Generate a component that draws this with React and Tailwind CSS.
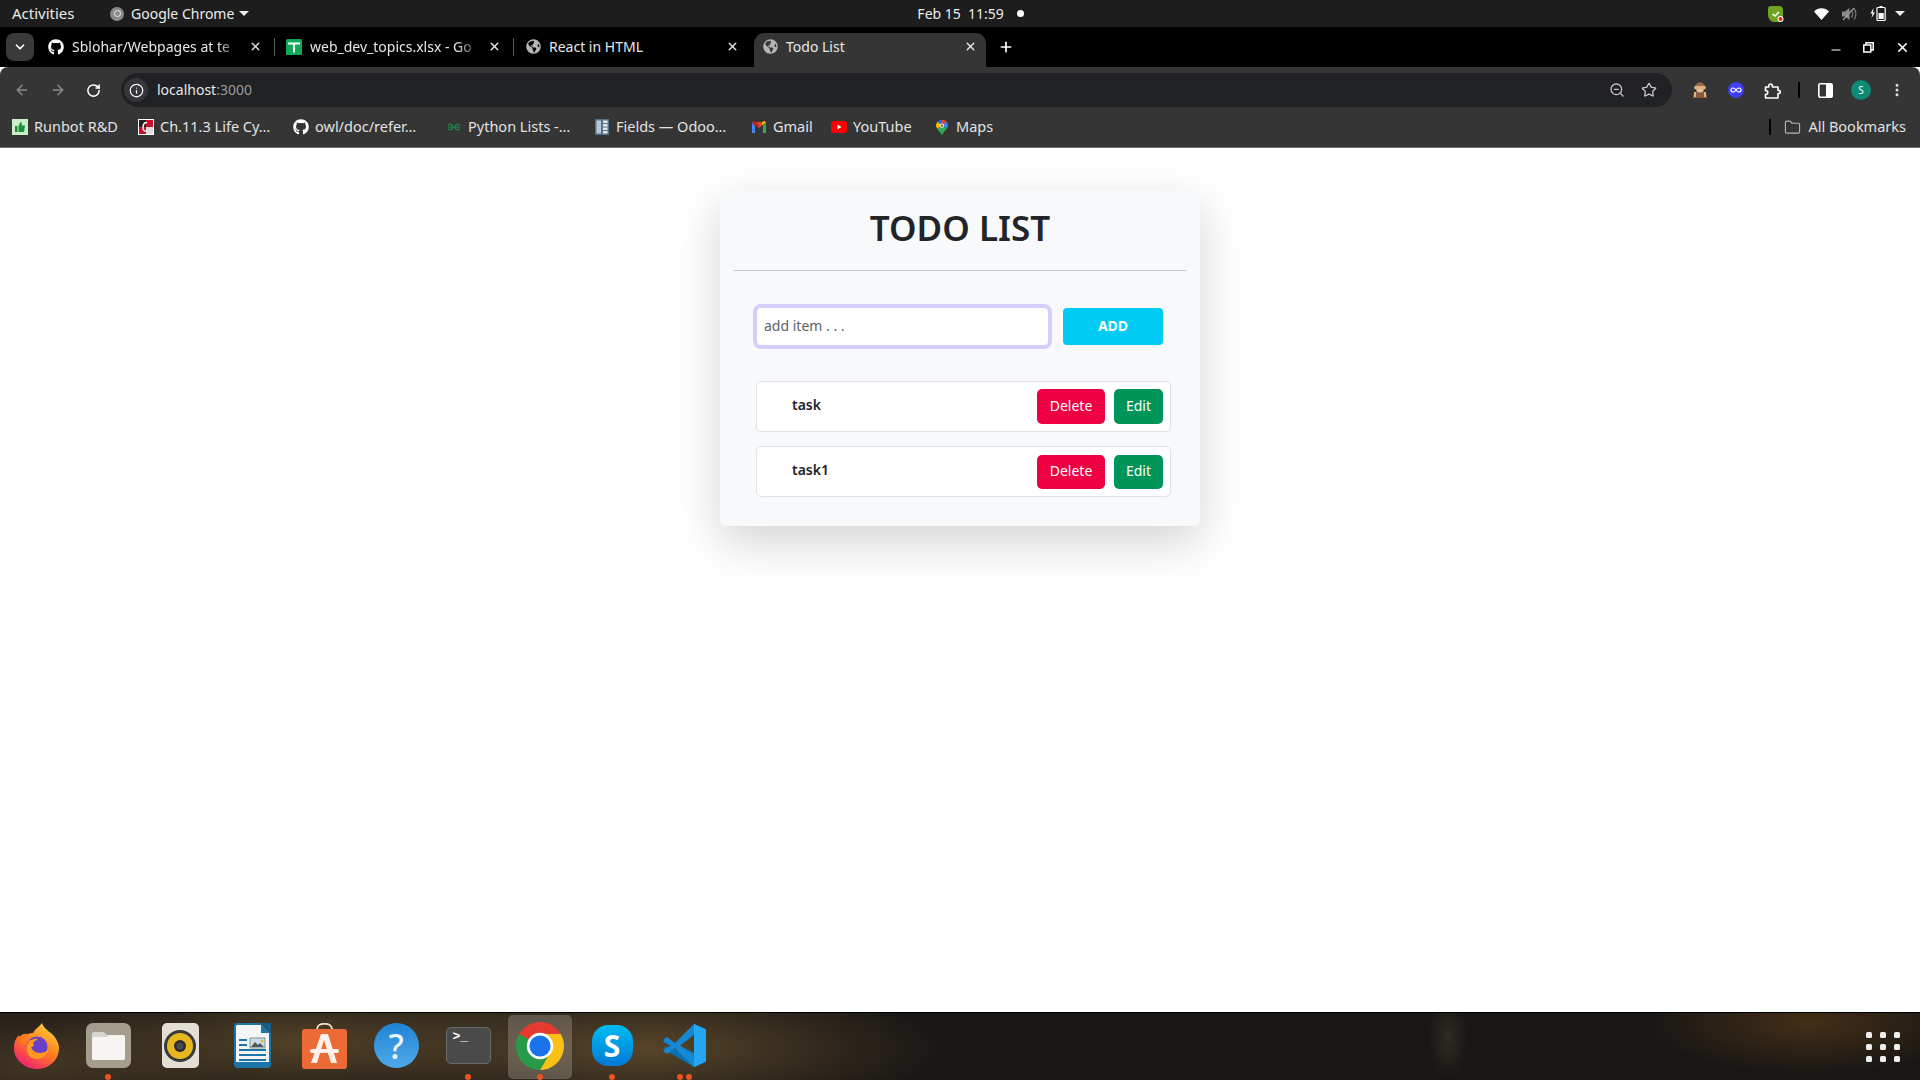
import { ArrowLeft, ArrowRight, RotateCw, Info, ZoomOut, Star, MoreVertical, Folder, X, Plus, ChevronDown, Minus } from "lucide-react"
import { FaGithub, FaGlobeAmericas } from "react-icons/fa"

const ui = "font-['Noto_Sans',sans-serif]"

const Tab = ({ icon, title, active, fade, sep, className }) => (
  <div className={`relative flex h-[34px] items-center pb-[7px] ${active ? "rounded-t-[10px] bg-[#353535] pl-[8px] pr-[9px]" : "pl-[11px] pr-[13px]"} ${className}`}>
    <span className="flex w-[16px] shrink-0 items-center justify-center">{icon}</span>
    <span className={`ml-[8px] min-w-0 flex-1 whitespace-nowrap text-[14px] text-[#e8e8e8] ${fade ? "[mask-image:linear-gradient(to_right,black_85%,transparent)]" : ""}`}>{title}</span>
    <X size={13} strokeWidth={2.5} className="ml-[6px] shrink-0 text-[#e8e8e8]" />
    {sep && <span className="absolute right-0 top-[5px] h-[18px] w-px bg-[#5a5a5a]" />}
  </div>
)

const Bookmark = ({ icon, label, className }) => (
  <div className={`flex shrink-0 items-center gap-[6px] ${className}`}>
    <span className="flex w-[16px] shrink-0 items-center justify-center">{icon}</span>
    <span className="-mt-[1px] whitespace-nowrap text-[14.500px] text-[#e3e3e3]">{label}</span>
  </div>
)

const ThumbIcon = () => (
  <svg width="16" height="16" viewBox="0 0 16 16">
    <rect width="16" height="16" fill="#c8efc8" />
    <path d="M3 7h2.500v6H3zM6.500 7l2-4c1 0 1.500 .8 1.300 2L9.500 6.500H13l-1 6.500H6.500z" fill="#1f8f3c" />
  </svg>
)

const CherryIcon = () => (
  <svg width="16" height="16" viewBox="0 0 16 16">
    <rect width="16" height="16" fill="#fff" />
    <rect x="1" y="1" width="14" height="14" fill="#222" />
    <rect x="8" y="1" width="7" height="7" fill="#c8102e" />
    <rect x="1" y="8" width="7" height="7" fill="#c8102e" />
    <rect x="8" y="8" width="7" height="7" fill="#ddd" />
    <path d="M9 3.500C6 3.500 5 6 5 8.500s1 4 3.500 3.500" fill="none" stroke="#fff" strokeWidth="1.400" />
  </svg>
)

const GfgIcon = () => (
  <svg width="14" height="10" viewBox="0 0 14 10" fill="none" stroke="#1e8f4a" strokeWidth="1.200">
    <path d="M7 5H.800M7 5h6.200M1 3.500a2.500 2.500 0 0 1 4.500 0c.8 1.500.8 1.500 0 3a2.500 2.500 0 0 1-4.500 0M13 3.500a2.500 2.500 0 0 0-4.500 0c-.8 1.500-.8 1.500 0 3a2.500 2.500 0 0 0 4.500 0" />
  </svg>
)

const OdooIcon = () => (
  <svg width="14" height="16" viewBox="0 0 14 16">
    <rect width="14" height="16" fill="#54708c" />
    <rect x="1.500" y="1.500" width="4.500" height="13" fill="#b8c8d6" />
    <rect x="8" y="1.500" width="4.500" height="13" fill="#e6e6e6" />
    <path d="M8 4.500h4.500M8 8h4.500M8 11.500h4.500" stroke="#54708c" strokeWidth="1.200" />
  </svg>
)

const GmailIcon = () => (
  <svg width="14" height="12" viewBox="0 0 14 12">
    <path d="M0 1.500V12h3V5z" fill="#4285f4" />
    <path d="M14 1.500V12h-3V5z" fill="#34a853" />
    <path d="M0 1.500 7 7l3-2.400V1z" fill="#ea4335" />
    <path d="M10 1v3.600l4-3.100C14 .5 12 -.5 10 1z" fill="#fbbc04" />
    <path d="M0 1.500C0 .5 1.800 -.5 3 .8L7 4v3z" fill="#c5221f" />
  </svg>
)

const YoutubeIcon = () => (
  <svg width="16" height="12" viewBox="0 0 16 12">
    <rect width="16" height="12" rx="3" fill="#f00" />
    <path d="M6.500 3.500v5L10.500 6z" fill="#fff" />
  </svg>
)

const MapsIcon = () => (
  <svg width="12" height="17" viewBox="0 0 13 17">
    <path d="M6.500 0A6.300 6.300 0 0 0 1.700 2.200L6.500 6.500z" fill="#1a73e8" />
    <path d="M6.500 0c2 0 3.700 .9 4.900 2.400L6.500 6.500z" fill="#ea4335" />
    <path d="M1.700 2.200A6.300 6.300 0 0 0 1.200 9.800L6.500 6.500z" fill="#fbbc04" />
    <path d="M11.400 2.400A6.300 6.300 0 0 1 11.800 9.600L6.500 6.500z" fill="#4285f4" />
    <path d="M1.200 9.800C3 12.400 5.300 14 6.500 17c1.200-3 3.300-4.700 5.300-7.400L6.500 6.500z" fill="#34a853" />
    <circle cx="6.500" cy="6.500" r="2.200" fill="#fff" />
    <circle cx="6.500" cy="6.500" r="1.300" fill="#7a5a10" />
  </svg>
)

const SheetsIcon = () => (
  <svg width="16" height="16" viewBox="0 0 16 16">
    <rect width="16" height="16" rx="1.500" fill="#0fa958" />
    <path d="M2 3.500h12v2H9v8H7v-8H2z" fill="#fff" />
    <path d="M2 7.500h5v1.500H2zM9 7.500h5v1.500H9z" fill="#0fa958" />
  </svg>
)

const MonkeyIcon = () => (
  <svg width="16" height="16" viewBox="0 0 16 16">
    <path d="M1 16c0-5 2-7 7-7s7 2 7 7z" fill="#8a5a3c" />
    <circle cx="8" cy="5.500" r="5" fill="#9a6a48" />
    <ellipse cx="8" cy="8" rx="3.500" ry="2.500" fill="#e8c098" />
    <rect x="2" y="4" width="12" height="3" rx="1.500" fill="#e0b080" />
    <path d="M3 10v5M13 10v5" stroke="#e0b080" strokeWidth="2" />
  </svg>
)

const InfinityIcon = () => (
  <svg width="16" height="16" viewBox="0 0 16 16">
    <circle cx="8" cy="8" r="8" fill="#3f3ff0" />
    <path d="M8 8C7 6.500 6 6 5 6a2 2 0 0 0 0 4c1 0 2-.5 3-2s2-2 3-2a2 2 0 0 1 0 4c-1 0-2-.5-3-2z" fill="none" stroke="#fff" strokeWidth="1.200" />
  </svg>
)

const PuzzleIcon = () => (
  <svg width="17" height="17" viewBox="0 0 17 17" fill="none" stroke="#fff" strokeWidth="1.600" strokeLinejoin="round">
    <path d="M1.500 5h3.300V3.800c0-2.500 3.600-2.500 3.600 0V5H14v3.500h1.300c1.300 0 1.300 3 0 3H14V16H1.500v-3.800h1c1.700 0 1.700-3.500 0-3.500h-1z" />
  </svg>
)

const SidePanelIcon = () => (
  <svg width="15" height="15" viewBox="0 0 15 15">
    <rect x=".8" y=".8" width="13.400" height="13.400" rx="1.500" fill="#353535" stroke="#fff" strokeWidth="1.600" />
    <path d="M8 .8h5.500a.8 .8 0 0 1 .8 .8v11.800a.8 .8 0 0 1-.8 .8H8z" fill="#fff" />
  </svg>
)

const RestoreIcon = () => (
  <svg width="11" height="11" viewBox="0 0 11 11" fill="none" stroke="#fff" strokeWidth="1.500">
    <rect x=".8" y="3" width="7" height="7" />
    <path d="M3 3V.8h7.200V8H8" />
  </svg>
)

const ShieldTray = () => (
  <svg width="16" height="16" viewBox="0 0 16 16">
    <path d="M3 0h8c3 0 4 2 4 4v8c0 2-1 4-4 4H6C2 16 0 12 0 8V3c0-2 1-3 3-3z" fill="#6fa51e" />
    <path d="M4.500 8 7 10l4-4" fill="none" stroke="#fff" strokeWidth="1.600" />
    <circle cx="12.500" cy="13" r="3" fill="#fff" />
    <circle cx="12.500" cy="13" r="2" fill="#e8262a" />
  </svg>
)

const WifiIcon = () => (
  <svg width="15" height="12" viewBox="0 0 15 12">
    <path d="M0 3.500C4 -.8 11 -.8 15 3.500L7.500 12z" fill="#fff" />
  </svg>
)

const VolumeIcon = () => (
  <svg width="15" height="14" viewBox="0 0 15 14" fill="none">
    <path d="M0 4.500h3L7.500 1v12L3 9.500H0z" fill="#8a8a8a" />
    <path d="M9.500 3.500c1.500 2 1.500 5 0 7M12 1.500c2.500 3 2.500 8 0 11" stroke="#7a7a7a" strokeWidth="1.200" />
    <path d="M1 13 12 1" stroke="#9a9a9a" strokeWidth="1.200" />
  </svg>
)

const BatteryIcon = () => (
  <svg width="16" height="15" viewBox="0 0 16 15">
    <path d="M3.500 2 .5 7.500h2L1.500 12 5 6.500H3z" fill="#fff" />
    <rect x="7" y="1.500" width="8.200" height="13" rx="1" fill="none" stroke="#fff" strokeWidth="1.200" />
    <rect x="9.500" y="0" width="3" height="1.500" fill="#fff" />
    <rect x="8.500" y="7" width="5.200" height="6" fill="#fff" />
  </svg>
)

const FirefoxIcon = () => (
  <svg width="45" height="46" viewBox="0 0 45 46">
    <defs>
      <linearGradient id="ffa" x1="0.800" y1="0" x2="0.200" y2="1">
        <stop offset="0" stopColor="#ffd43a" />
        <stop offset="0.500" stopColor="#ff7a1f" />
        <stop offset="1" stopColor="#f0177c" />
      </linearGradient>
    </defs>
    <path d="M28 0c1 4 5 7 10 11 5 5 7 10 7 14 0 12-10 21-22 21S0 37 0 25c0-6 2-10 5-13 0 2 1 4 2 5 2-4 7-7 12-7 2-4 6-6 9-10z" fill="url(#ffa)" />
    <circle cx="23" cy="24" r="10.500" fill="#6a3fc8" />
    <path d="M13 22c2-5 7-7 11-6-2 1-4 3-5 4 2 2 0 4-2 4 1 3 4 6 9 6 5 0 8-3 9-5 0 6-6 11-12 11-7 0-12-6-10-14z" fill="#ff9a1f" />
    <path d="M5 14c3-3 6-4 9-3-2 1-3 3-3 4 2 0 5 1 6 3-3 0-5 2-6 4-3-2-5-5-6-8z" fill="#ff7a1f" />
  </svg>
)

const FilesIcon = () => (
  <div className="flex h-[45px] w-[45px] items-center justify-center rounded-[7px] bg-[#a59d8e]">
    <svg width="33" height="28" viewBox="0 0 33 28">
      <path d="M2 0h10l3 3h16a2 2 0 0 1 2 2v21a2 2 0 0 1-2 2H2a2 2 0 0 1-2-2V2a2 2 0 0 1 2-2z" fill="#d8d5cf" />
      <path d="M2 5h12l3-2h14a2 2 0 0 1 2 2v21a2 2 0 0 1-2 2H2a2 2 0 0 1-2-2V7a2 2 0 0 1 2-2z" fill="#f6f5f3" />
    </svg>
  </div>
)

const RhythmboxIcon = () => (
  <div className="flex h-[45px] w-[37px] items-center justify-center rounded-[5px] bg-[#e3dfd5]">
    <svg width="32" height="32" viewBox="0 0 32 32">
      <circle cx="16" cy="16" r="16" fill="#3a3a3a" />
      <circle cx="16" cy="16" r="13" fill="#e8b81f" />
      <circle cx="16" cy="16" r="6" fill="#2b2b2b" />
      <circle cx="16" cy="16" r="3.500" fill="#4a4a4a" />
    </svg>
  </div>
)

const WriterIcon = () => (
  <svg width="37" height="45" viewBox="0 0 37 45">
    <path d="M3 0h24l10 10v31a4 4 0 0 1-4 4H4a4 4 0 0 1-4-4V3a3 3 0 0 1 3-3z" fill="#1b75a8" />
    <path d="M3 2h24v8h8v29H2V3z" fill="#f4f5f6" />
    <path d="M28 0h9v9z" fill="#17608c" />
    <path d="M5 16h8v2H5zM5 21h8v2H5zM5 26h27v2H5zM5 31h27v2H5zM5 36h27v2H5z" fill="#1b75a8" />
    <rect x="16" y="15" width="15" height="10" fill="#c8dfe8" stroke="#555" strokeWidth=".6" />
    <path d="M17 24l4-5 3 3 2-2 4 4z" fill="#555" />
    <circle cx="28" cy="18" r="1.500" fill="#f2b33d" />
  </svg>
)

const StoreIcon = () => (
  <svg width="45" height="46" viewBox="0 0 45 46">
    <path d="M15 6c0-7 15-7 15 0" fill="none" stroke="#f0d8c0" strokeWidth="2" />
    <path d="M3 6h39a3 3 0 0 1 3 3v34a3 3 0 0 1-3 3H3a3 3 0 0 1-3-3V9a3 3 0 0 1 3-3z" fill="#ec6a35" />
    <path d="M19 11h7l9 29h-6l-7-23-7 23h-6z" fill="#fdf0e8" />
    <rect x="8" y="26" width="29" height="4" rx="2" fill="#fdf0e8" />
  </svg>
)

const HelpIcon = () => (
  <div className="flex h-[45px] w-[45px] items-center justify-center rounded-full bg-gradient-to-b from-[#1d83d6] to-[#4eaae8] font-['Noto_Sans',sans-serif] text-[34px] font-medium leading-none text-[#eaf4fb]">?</div>
)

const TerminalIcon = () => (
  <div className="h-[37px] w-[45px] rounded-[5px] border border-[#6a6a6a] bg-[#4a4a4a] pl-[6px] font-['Liberation_Mono',monospace] text-[13px] font-bold leading-[17px] text-white">&gt;_</div>
)

const ChromeIcon = () => (
  <svg width="48" height="48" viewBox="4 4 40 40">
    <path d="M6.680 14A20 20 0 0 1 41.320 14H24A10 10 0 0 0 15.340 19Z" fill="#e33b2e" />
    <path d="M41.320 14A20 20 0 0 1 24 44L32.660 29A10 10 0 0 0 24 14Z" fill="#fbc116" />
    <path d="M24 44A20 20 0 0 1 6.680 14L15.340 19A10 10 0 0 0 32.660 29Z" fill="#279b48" />
    <circle cx="24" cy="24" r="11" fill="#fff" />
    <circle cx="24" cy="24" r="8.800" fill="#1a73e8" />
  </svg>
)

const SkypeIcon = () => (
  <div className="flex h-[41px] w-[41px] items-center justify-center rounded-[16px] bg-gradient-to-b from-[#00bdf2] to-[#0078d4] font-['Noto_Sans',sans-serif] text-[30px] font-bold leading-none text-white">S</div>
)

const VscodeIcon = () => (
  <svg width="43" height="43" viewBox="0 0 43 43">
    <path d="M31 0 43 5.500v32L31 43 0 25l4-3 27 11z" fill="#0a6fb5" />
    <path d="M0 18l4-3 27 14v14L12 24z" fill="#0f7fc4" />
    <path d="M31 0 12 19l-8-6-4 3 8 5.500L0 27l4 3 8-6 19 19 12-5.500v-32zm0 11v21L17 21.500z" fill="#1688d2" />
    <path d="M31 0 43 5.500v32L31 43z" fill="#25a6f2" />
  </svg>
)

const DockItem = ({ children, dots = 0, active }) => (
  <div className="relative flex h-[68px] w-[72px] shrink-0 items-center justify-center pb-[2px]">
    {active && <span className="absolute left-[4px] top-[2px] h-[64px] w-[64px] rounded-[5px] bg-white/20" />}
    <span className="relative flex items-center justify-center">{children}</span>
    {dots > 0 && (
      <span className="absolute bottom-[1px] left-0 right-0 flex justify-center gap-[3px]">
        {[...Array(dots)].map((_, i) => (
          <span key={i} className="h-[6px] w-[6px] rounded-full bg-[#e95420]" />
        ))}
      </span>
    )}
  </div>
)

const TaskRow = ({ name, btnHeight }) => (
  <div className="flex h-[51px] w-[415px] items-center justify-between rounded-[5px] border border-[#dee2e6] bg-white pl-[35px] pr-[7px]">
    <span className="-mt-[5px] text-[14px] font-semibold text-[#212529]">{name}</span>
    <div className="flex gap-[9px]">
      <button className={`w-[68px] rounded-[5px] bg-[#ee0043] pb-[2px] text-[14px] text-white ${btnHeight}`}>Delete</button>
      <button className={`w-[49px] rounded-[5px] bg-[#009558] pb-[2px] text-[14px] text-white ${btnHeight}`}>Edit</button>
    </div>
  </div>
)

export default function App() {
  return (
    <div className={`flex h-[1080px] w-[1920px] flex-col overflow-hidden bg-white ${ui}`}>
      {/* gnome top bar */}
      <div className="flex h-[27px] shrink-0 items-center bg-[#1d1d1d] text-[14px] text-[#ececec]">
        <span className="ml-[12px] w-[98px] text-[15px]">Activities</span>
        <span className="flex h-[14px] w-[14px] items-center justify-center rounded-full bg-[#8a8a8a]">
          <span className="h-[7px] w-[7px] rounded-full border border-[#eee]" />
        </span>
        <span className="ml-[7px] whitespace-nowrap">Google Chrome</span>
        <span className="ml-[5px] h-0 w-0 border-x-[5px] border-t-[5px] border-x-transparent border-t-[#ececec]" />
        <span className="ml-[668px] w-[100px] whitespace-pre">Feb 15  11:59</span>
        <span className="h-[7px] w-[7px] rounded-full bg-white" />
        <span className="ml-[744px] flex w-[46px] justify-start"><ShieldTray /></span>
        <span className="flex w-[28px] justify-start"><WifiIcon /></span>
        <span className="flex w-[28px] justify-start"><VolumeIcon /></span>
        <span className="flex w-[25px] justify-start"><BatteryIcon /></span>
        <span className="h-0 w-0 border-x-[5px] border-t-[5px] border-x-transparent border-t-[#ececec]" />
      </div>

      {/* chrome tab strip */}
      <div className="flex h-[40px] shrink-0 items-end bg-black">
        <div className="mb-[6px] ml-[6px] flex h-[28px] w-[28px] items-center justify-center rounded-lg bg-[#3a3a3a]">
          <ChevronDown size={14} strokeWidth={3} className="text-white" />
        </div>
        <Tab icon={<FaGithub size={16} className="text-white" />} title="Sblohar/Webpages at te" fade sep className="ml-[3px] w-[238px]" />
        <Tab icon={<SheetsIcon />} title="web_dev_topics.xlsx - Go" fade sep className="w-[239px]" />
        <Tab icon={<FaGlobeAmericas size={15} className="text-[#b5b5b5]" />} title="React in HTML" className="w-[238px] mr-[2px]" />
        <Tab icon={<FaGlobeAmericas size={15} className="text-[#b5b5b5]" />} title="Todo List" active className="w-[232px]" />
        <Plus size={16} strokeWidth={2.5} className="mb-[12px] ml-[12px] text-white" />
        <div className="mb-[10px] ml-auto flex items-center">
          <Minus size={14} strokeWidth={2} className="mt-[6px] text-white" />
          <span className="ml-[20px]"><RestoreIcon /></span>
          <X size={15} strokeWidth={2.5} className="ml-[21px] mr-[10px] text-white" />
        </div>
      </div>

      {/* address bar */}
      <div className="flex h-[40px] shrink-0 items-end rounded-t-[8px] bg-[#353535]">
        <div className="flex h-[34px] w-full items-center">
          <ArrowLeft size={16} strokeWidth={2.2} className="ml-[14px] text-[#8a8a8a]" />
          <ArrowRight size={16} strokeWidth={2.2} className="ml-[20px] text-[#8a8a8a]" />
          <RotateCw size={15} strokeWidth={2.4} className="ml-[20px] text-white" />
          <div className="ml-[20px] flex h-[34px] w-[1551px] items-center rounded-full bg-[#202124]">
            <span className="ml-[3px] flex h-[24px] w-[24px] items-center justify-center rounded-full bg-[#35363a]">
              <Info size={15} strokeWidth={2} className="text-white" />
            </span>
            <span className="-mt-[2px] ml-[9px] text-[14px] text-[#e8e8e8]">localhost<span className="text-[#9a9a9a]">:3000</span></span>
            <ZoomOut size={16} strokeWidth={2} className="ml-auto text-[#c4c4c4]" />
            <Star size={16} strokeWidth={2} className="ml-[16px] mr-[15px] text-[#c4c4c4]" />
          </div>
          <span className="ml-[20px]"><MonkeyIcon /></span>
          <span className="ml-[20px]"><InfinityIcon /></span>
          <span className="ml-[20px]"><PuzzleIcon /></span>
          <span className="ml-[17px] h-[16px] w-[2px] bg-black" />
          <span className="ml-[18px]"><SidePanelIcon /></span>
          <span className="ml-[18px] flex h-[20px] w-[20px] items-center justify-center rounded-full bg-[#0b8a74] text-[10px] text-white">S</span>
          <MoreVertical size={16} strokeWidth={2.5} className="ml-[18px] text-[#e3e3e3]" />
        </div>
      </div>

      {/* bookmarks */}
      <div className="flex h-[41px] shrink-0 items-center border-b border-[#6e6e6e] bg-[#353535] pl-[12px]">
        <Bookmark icon={<ThumbIcon />} label="Runbot R&D" className="w-[126px]" />
        <Bookmark icon={<CherryIcon />} label="Ch.11.3 Life Cy…" className="w-[155px]" />
        <Bookmark icon={<FaGithub size={16} className="text-white" />} label="owl/doc/refer…" className="w-[153px]" />
        <Bookmark icon={<GfgIcon />} label="Python Lists -…" className="w-[148px]" />
        <Bookmark icon={<OdooIcon />} label="Fields — Odoo…" className="w-[157px]" />
        <Bookmark icon={<GmailIcon />} label="Gmail" className="w-[80px]" />
        <Bookmark icon={<YoutubeIcon />} label="YouTube" className="w-[103px]" />
        <Bookmark icon={<MapsIcon />} label="Maps" />
        <span className="ml-auto h-[16px] w-[2px] bg-black" />
        <Folder size={17} strokeWidth={1.6} className="ml-[13px] text-[#b5b5b5]" />
        <span className="-mt-[1px] ml-[7px] mr-[14px] whitespace-nowrap text-[14.500px] text-[#e3e3e3]">All Bookmarks</span>
      </div>

      {/* page */}
      <div className="min-h-0 flex-1 bg-white pt-[43px]">
        <div className="mx-auto flex h-[335px] w-[480px] flex-col rounded-[6px] bg-[#f8f9fa] shadow-[0_16px_48px_rgba(0,0,0,0.175)]">
          <h1 className="mt-[13px] mb-[2px] text-center text-[35px] font-semibold leading-[48px] text-[#212529]">TODO LIST</h1>
          <hr className="mx-[14px] mt-[16px] border-t border-[#c4c5c7]" />
          <div className="ml-[33px] mt-[33px] flex items-center">
            <input
              placeholder="add item . . ."
              className="h-[45px] w-[299px] rounded-[8px] border-[4px] border-[#d6cdfc] bg-white pb-[2px] pl-[7px] text-[14px] text-[#212529] outline-none placeholder:text-[#5c636a]"
            />
            <button className="ml-[11px] h-[37px] w-[100px] rounded-[4px] bg-[#00cbf5] pb-[2px] text-[14px] font-bold text-white">ADD</button>
          </div>
          <div className="ml-[36px] mt-[32px] flex flex-col gap-[14px]">
            <TaskRow name="task" btnHeight="h-[35px]" />
            <TaskRow name="task1" btnHeight="h-[34px]" />
          </div>
        </div>
      </div>

      {/* ubuntu dock */}
      <div className="flex h-[68px] shrink-0 items-center border-t border-black bg-[#191715] bg-[radial-gradient(ellipse_200px_70px_at_40px_50px,rgba(110,85,50,0.5),transparent),radial-gradient(ellipse_260px_70px_at_300px_30px,rgba(130,100,55,0.55),transparent),radial-gradient(ellipse_300px_70px_at_640px_35px,rgba(130,100,55,0.6),transparent),radial-gradient(ellipse_160px_50px_at_1810px_10px,rgba(120,75,25,0.45),transparent),radial-gradient(ellipse_20px_40px_at_1448px_25px,rgba(90,90,60,0.3),transparent)]">
        <DockItem><FirefoxIcon /></DockItem>
        <DockItem dots={1}><FilesIcon /></DockItem>
        <DockItem><RhythmboxIcon /></DockItem>
        <DockItem><WriterIcon /></DockItem>
        <DockItem><StoreIcon /></DockItem>
        <DockItem><HelpIcon /></DockItem>
        <DockItem dots={1}><TerminalIcon /></DockItem>
        <DockItem dots={1} active><ChromeIcon /></DockItem>
        <DockItem dots={1}><SkypeIcon /></DockItem>
        <DockItem dots={2}><VscodeIcon /></DockItem>
        <div className="ml-auto mr-[20px] grid grid-cols-3 gap-x-[8px] gap-y-[6px]">
          {[...Array(9)].map((_, i) => (
            <span key={i} className="h-[6px] w-[6px] rounded-[1.500px] bg-[#eeeeee]" />
          ))}
        </div>
      </div>
    </div>
  )
}
